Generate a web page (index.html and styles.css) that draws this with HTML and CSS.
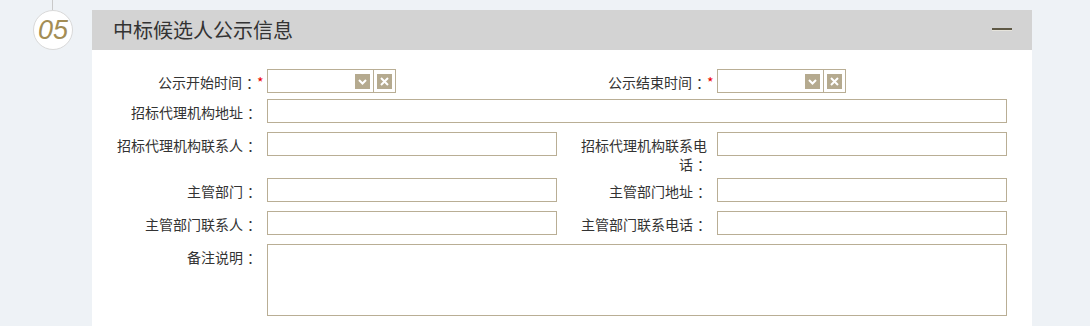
FILE: index.html
```html
<!DOCTYPE html>
<html lang="zh-CN">

<head>
  <meta charset="UTF-8">
  <meta name="viewport" content="width=device-width, initial-scale=1.0">
  <title>中标候选人公示信息</title>
  <link rel="stylesheet" href="styles.css">
</head>

<body>
  <div class="page">
    <div class="step">
      <div class="step-line"></div>
      <div class="step-num">05</div>
    </div>

    <div class="panel">
      <div class="panel-head">
        <h2 class="panel-title">中标候选人公示信息</h2>
        <span class="collapse" title="收起"></span>
      </div>

      <div class="panel-body">
        <div class="row row-first">
          <label class="label">公示开始时间<span class="colon">：</span><span class="req">*</span></label>
          <div class="date-box">
            <input type="text" class="date-input">
            <span class="date-btn">
              <svg width="15" height="15" viewBox="0 0 15 15"><polyline points="4,6 7.5,9.5 11,6" fill="none" stroke="#fff" stroke-width="2"/></svg>
            </span>
            <span class="date-sep"></span>
            <span class="date-btn clear-btn">
              <svg width="15" height="15" viewBox="0 0 15 15"><path d="M4 4 L11 11 M11 4 L4 11" stroke="#fff" stroke-width="2"/></svg>
            </span>
          </div>
          <label class="label">公示结束时间<span class="colon">：</span><span class="req">*</span></label>
          <div class="date-box">
            <input type="text" class="date-input">
            <span class="date-btn">
              <svg width="15" height="15" viewBox="0 0 15 15"><polyline points="4,6 7.5,9.5 11,6" fill="none" stroke="#fff" stroke-width="2"/></svg>
            </span>
            <span class="date-sep"></span>
            <span class="date-btn clear-btn">
              <svg width="15" height="15" viewBox="0 0 15 15"><path d="M4 4 L11 11 M11 4 L4 11" stroke="#fff" stroke-width="2"/></svg>
            </span>
          </div>
        </div>

        <div class="row">
          <label class="label">招标代理机构地址<span class="colon">：</span></label>
          <input type="text" class="field field-wide">
        </div>

        <div class="row row-tall">
          <label class="label">招标代理机构联系人<span class="colon">：</span></label>
          <input type="text" class="field">
          <label class="label">招标代理机构联系电话<span class="colon">：</span></label>
          <input type="text" class="field">
        </div>

        <div class="row">
          <label class="label">主管部门<span class="colon">：</span></label>
          <input type="text" class="field">
          <label class="label">主管部门地址<span class="colon">：</span></label>
          <input type="text" class="field">
        </div>

        <div class="row">
          <label class="label">主管部门联系人<span class="colon">：</span></label>
          <input type="text" class="field">
          <label class="label">主管部门联系电话<span class="colon">：</span></label>
          <input type="text" class="field">
        </div>

        <div class="row">
          <label class="label">备注说明<span class="colon">：</span></label>
          <textarea class="field field-wide memo"></textarea>
        </div>
      </div>
    </div>
  </div>
</body>

</html>
```

FILE: styles.css
```css
body {
  margin: 0;
  background: #eef2f6;
  font-family: "Microsoft YaHei", "Noto Sans CJK SC", "Noto Sans", sans-serif;
  color: #333;
}

.page {
  display: flex;
  align-items: flex-start;
}

.step {
  width: 92px;
  flex-shrink: 0;
}

.step-line {
  width: 1px;
  height: 10px;
  margin-left: 52px;
  background: #c9c9c9;
}

.step-num {
  width: 38px;
  height: 38px;
  margin-left: 33px;
  border: 1px solid #d9d9d9;
  border-radius: 50%;
  background: #fff;
  font-family: "Liberation Sans", Arial, sans-serif;
  font-style: italic;
  font-size: 27px;
  line-height: 39px;
  text-align: center;
  color: #a38d55;
}

.panel {
  width: 940px;
  margin-top: 10px;
  background: #fff;
}

.panel-head {
  display: flex;
  align-items: center;
  justify-content: space-between;
  height: 40px;
  padding: 0 20px 0 21px;
  background: #d3d3d3;
}

.panel-title {
  margin: 0;
  font-size: 20px;
  font-weight: normal;
  line-height: 40px;
  color: #333;
}

.collapse {
  width: 20px;
  height: 2px;
  margin-top: -3px;
  background: #5e5845;
  box-shadow: 0 1px 0 #e6e4dc;
}

.panel-body {
  padding: 19px 0 20px;
}

.row {
  display: grid;
  grid-template-columns: 175px 290px 160px 290px;
  align-items: start;
  margin-bottom: 9px;
}

.row-first {
  margin-bottom: 6px;
}

.row-tall {
  height: 37px;
}

.label {
  padding: 4px 10px 0 0;
  font-size: 14px;
  line-height: 19px;
  text-align: right;
  color: #333;
}

/* nudge the full-width colon to the middle of its box */
.colon {
  padding-left: 4px;
  margin-right: -4px;
}

.req {
  display: inline-block;
  width: 10px;
  margin-right: -10px;
  padding-left: 1px;
  color: #e00;
  text-align: left;
}

.field {
  box-sizing: border-box;
  height: 24px;
  margin: 0;
  padding: 0 4px;
  border: 1px solid #b9ae95;
  background: #fff;
  font: 14px "Noto Sans CJK SC", sans-serif;
  outline: none;
}

.field-wide {
  grid-column: 2 / 5;
  width: 740px;
}

.memo {
  height: 72px;
  resize: none;
}

.date-box {
  box-sizing: border-box;
  display: flex;
  align-items: center;
  width: 129px;
  height: 24px;
  border: 1px solid #b9ae95;
  background: #fff;
}

.date-input {
  flex: 1;
  min-width: 0;
  height: 100%;
  padding: 0 4px;
  border: none;
  outline: none;
}

.date-btn {
  display: flex;
  width: 15px;
  height: 15px;
  margin-right: 3px;
  background: #b5aa8f;
}

.date-sep {
  align-self: stretch;
  width: 1px;
  margin-right: 3px;
  background: #b9ae95;
}
```
